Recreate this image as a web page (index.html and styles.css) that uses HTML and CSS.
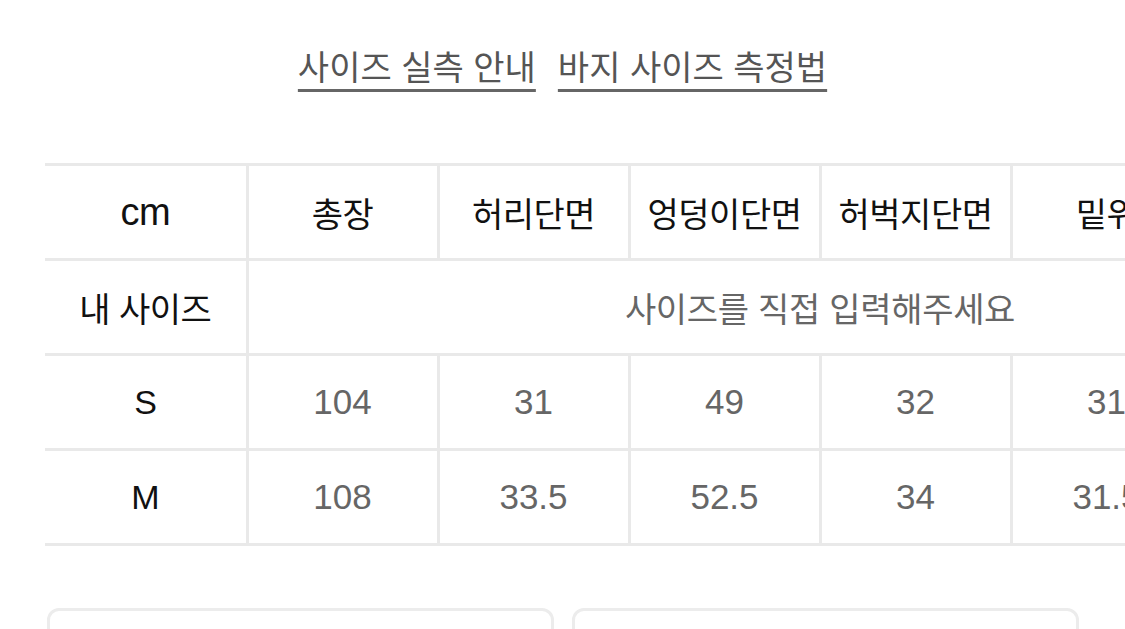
FILE: index.html
```html
<!DOCTYPE html>
<html lang="ko">
<head>
<meta charset="utf-8">
<title>사이즈</title>
<link rel="stylesheet" href="styles.css">
</head>
<body>
<div class="page">
  <nav class="links">
    <a class="link" href="#">사이즈 실측 안내</a>
    <a class="link" href="#">바지 사이즈 측정법</a>
  </nav>
  <div class="table-wrap">
    <table class="size-table">
      <colgroup>
        <col class="col-label">
        <col class="col-data"><col class="col-data"><col class="col-data">
        <col class="col-data"><col class="col-data"><col class="col-data">
      </colgroup>
      <thead>
        <tr>
          <th class="label latin-head">cm</th>
          <th>총장</th>
          <th>허리단면</th>
          <th>엉덩이단면</th>
          <th>허벅지단면</th>
          <th>밑위</th>
          <th>밑단단면</th>
        </tr>
      </thead>
      <tbody>
        <tr>
          <th class="label">내 사이즈</th>
          <td class="hint" colspan="6">사이즈를 직접 입력해주세요</td>
        </tr>
        <tr>
          <th class="label latin">S</th>
          <td>104</td><td>31</td><td>49</td><td>32</td><td>31</td><td>21</td>
        </tr>
        <tr>
          <th class="label latin">M</th>
          <td>108</td><td>33.5</td><td>52.5</td><td>34</td><td>31.5</td><td>22</td>
        </tr>
      </tbody>
    </table>
  </div>
  <div class="cards">
    <div class="card"></div>
    <div class="card"></div>
  </div>
</div>
</body>
</html>
```
FILE: styles.css
```css
html, body {
  margin: 0;
  padding: 0;
  background: #ffffff;
  overflow: hidden;
}
body {
  font-family: "Liberation Sans", "Noto Sans CJK KR", sans-serif;
  color: #111;
}
.page {
  width: 1125px;
  height: 629px;
  overflow: hidden;
}
.links {
  display: flex;
  justify-content: center;
  gap: 22px;
  padding-top: 44px;
  height: 120px;
  box-sizing: border-box;
}
.link {
  font-family: "Noto Sans CJK KR", sans-serif;
  font-size: 34px;
  line-height: 44px;
  color: #555;
  text-decoration: underline;
  text-decoration-thickness: 3px;
  text-underline-offset: 9px;
  text-decoration-color: #666;
}
.table-wrap {
  padding-left: 45px;
  padding-top: 43px;
  overflow: hidden;
}
.size-table {
  border-collapse: collapse;
  table-layout: fixed;
  width: 1348px;
}
.col-label { width: 202px; }
.col-data { width: 191px; }
.size-table th,
.size-table td {
  height: 92px;
  padding: 0;
  text-align: center;
  vertical-align: middle;
  border: 3px solid #e9e9e9;
}
.size-table th {
  font-family: "Noto Sans CJK KR", sans-serif;
  font-weight: 400;
  font-size: 34px;
  color: #111;
  letter-spacing: -0.5px;
}
.size-table th.label {
  border-left: none;
}
.size-table th.latin {
  font-family: "Liberation Sans", sans-serif;
  font-size: 34px;
  font-weight: 400;
}
.size-table th.latin-head {
  font-family: "Liberation Sans", sans-serif;
  font-size: 38px;
  font-weight: 400;
}
.size-table td {
  font-family: "Liberation Sans", sans-serif;
  font-size: 35px;
  color: #666;
}
.size-table td.hint {
  font-family: "Noto Sans CJK KR", sans-serif;
  font-size: 34px;
  color: #666;
  letter-spacing: -0.3px;
}
.cards {
  display: flex;
  gap: 18px;
  padding-left: 47px;
  padding-top: 62px;
}
.card {
  width: 507px;
  height: 120px;
  border: 3px solid #ececec;
  border-radius: 12px;
  box-sizing: border-box;
}
```
